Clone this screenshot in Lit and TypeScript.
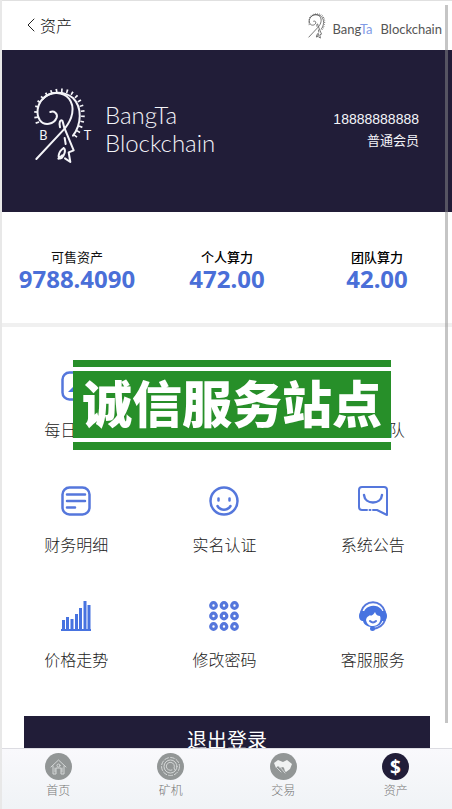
import { LitElement, html, css, svg, TemplateResult } from "lit";
import { customElement } from "lit/decorators.js";
import { classMap } from "lit/directives/class-map.js";

interface Entry {
  label: string;
  icon: TemplateResult;
}

const ram = svg`
  <path d="M90 92C101 87 113 97 109 109C101 130 72 134 59 117C46 98 50 68 70 50C92 29 128 31 146 52C166 78 156 114 133 142L48 233"/>
  <path d="M66 54C88 28 132 28 158 50C186 78 184 128 158 163"/>
  <path class="teeth" d="M52 126C38 90 54 50 82 37C112 21 146 24 168 46C196 78 194 128 164 166"/>
  <path d="M119 138C115 124 120 113 126 118C130 128 130 136 133 142L160 207L145 213L150 242L134 231M133 170L136 188M130 200C112 212 110 238 124 230C132 222 138 206 130 200M114 232L126 222"/>`;

const menu: Entry[] = [
  {
    label: "每日签到",
    icon: svg`<rect x="1.5" y="1.5" width="27" height="27" rx="7"/><path class="fill" d="M7 21l5-5 3 5z"/><path d="M14 20L22 9"/>`,
  },
  {
    label: "资产转换",
    icon: svg`<circle cx="15" cy="15" r="13"/><path d="M8 12h14l-4-4M22 18H8l4 4"/>`,
  },
  {
    label: "我的团队",
    icon: svg`<circle cx="15" cy="9" r="6"/><path d="M3 28c0-14 24-14 24 0z"/>`,
  },
  {
    label: "财务明细",
    icon: svg`<rect x="1.5" y="1.5" width="27" height="27" rx="7"/><path d="M6 8.500h18M6 15h18M6 21.500h8"/>`,
  },
  {
    label: "实名认证",
    icon: svg`<circle cx="15" cy="15" r="13.500"/><path d="M9.500 12.500v2M20.500 12.500v2M8.500 20c3 5 10 5 13 0"/>`,
  },
  {
    label: "系统公告",
    icon: svg`<path class="line" d="M9 24H4a3 3 0 0 1-3-3V4a3 3 0 0 1 3-3h22a3 3 0 0 1 3 3v25l-10-5h-4M11.500 24h1"/><path d="M6 9c1 10 17 10 18 0"/>`,
  },
  {
    label: "价格走势",
    icon: svg`<path class="fill" d="M0 28h30v2H0zM1 19h3v9H1zM5 16h3v12H5zM9.500 18h3v10h-3zM14 13h3v15h-3zM18 7h3v21h-3zM22.500 0h3v28h-3zM26.500 4h3v24h-3z"/>`,
  },
  {
    label: "修改密码",
    icon: svg`${[4.5, 15, 25.5].map((y) =>
      [4.5, 15, 25.5].map((x) => svg`<circle class="ring" cx=${x} cy=${y} r="2.800"/>`)
    )}`,
  },
  {
    label: "客服服务",
    icon: svg`<path class="line" d="M3 11C6-2 24-2 27 11M27 19C25 25 21 27 15 28"/>
      <path class="fill" d="M4 10h2v10H4C0 19 0 11 4 10zM26 10h-2v10h2c4-1 4-9 0-10z"/>
      <path class="fill" d="M5 20C1 0 29 0 25 18C24 23 20 26 15 26C10 26 6 24 5 20z"/>
      <path class="paper" d="M8 19C9 15 10 16 12 14C13 16 16 13 17 11C18 14 20 15 22 15C24 20 20 25 15 25C11 25 9 23 8 19z"/>
      <path class="line" d="M12 20c2 2 4 2 6 0"/><circle class="fill" cx="14.500" cy="27.500" r="2.500"/>`,
  },
];

const tabs: Entry[] = [
  {
    label: "首页",
    icon: svg`<path d="M6 14l7.500-7L21 14M8 13v8h3v-6h5v6h3v-8M10 15v4M17 15v4"/><circle cx="13.500" cy="12.500" r="1.500"/>`,
  },
  {
    label: "矿机",
    icon: svg`<circle class="dash" cx="13.500" cy="13.500" r="9"/><circle cx="13.500" cy="13.500" r="6.500"/><path d="M15 17a4 4 0 1 1 2-2l1 2"/>`,
  },
  {
    label: "交易",
    icon: svg`<path class="solid" d="M4 10l4-3 5 2 4-2 5 4-2 5-4 3c-2-1-1-4-3-5l-3 1-2-2-2 2z"/><path d="M7 15l4 4M10 14l5 6"/>`,
  },
  {
    label: "资产",
    icon: svg`<text x="13.500" y="20.500" text-anchor="middle">$</text>`,
  },
];

const stats = [
  { label: "可售资产", value: "9788.4090", strong: false },
  { label: "个人算力", value: "472.00", strong: true },
  { label: "团队算力", value: "42.00", strong: true },
];

@customElement("app-root")
export class AppRoot extends LitElement {
  static styles = css`
    :host {
      display: flex;
      flex-direction: column;
      position: relative;
      box-sizing: border-box;
      height: 100vh;
      border-left: 2px solid #e8e8e8;
      background: #fff;
      color: #222;
      font-family: "Noto Sans", "Noto Sans CJK SC", sans-serif;
      overflow: hidden;
    }
    a {
      color: inherit;
      text-decoration: none;
    }
    svg {
      display: block;
      fill: none;
      stroke-linecap: round;
      stroke-linejoin: round;
    }
    .top {
      flex: none;
      box-sizing: border-box;
      display: flex;
      align-items: center;
      justify-content: space-between;
      height: 50px;
      padding: 0 10px 0 24px;
      border-top: 1px solid #e0e0e0;
    }
    .back {
      display: flex;
      align-items: center;
      gap: 4px;
      padding: 0 0 2px;
      border: 0;
      background: none;
      color: #111;
      font: 300 16px/24px "Noto Sans CJK SC", sans-serif;
    }
    .back svg {
      width: 10px;
      height: 16px;
      stroke: #222;
    }
    .brand {
      display: flex;
      align-items: center;
      gap: 8px;
      color: #555;
      font: 400 13px/18px Lato, sans-serif;
    }
    .brand span {
      padding-top: 6px;
    }
    .brand svg {
      width: 20px;
      height: 26px;
      margin-right: -3px;
      stroke: #555;
      stroke-width: 7;
    }
    .brand em {
      color: #7f9be6;
      font-style: normal;
    }
    .teeth {
      stroke-width: 11;
      stroke-dasharray: 5 11;
      stroke-linecap: butt;
    }
    .scroll {
      flex: 1;
      min-height: 0;
      overflow: hidden;
    }
    .banner {
      display: flex;
      align-items: center;
      justify-content: space-between;
      box-sizing: border-box;
      height: 162px;
      padding: 0 33px 2px 31px;
      background: #211d38;
      color: #f4f4f8;
    }
    .logo {
      display: flex;
      align-items: center;
      gap: 12px;
      padding-bottom: 8px;
      font: 300 24px/28px Lato, sans-serif;
    }
    .logo span {
      padding-top: 6px;
    }
    .logo svg {
      width: 60px;
      height: 76px;
      stroke: #f4f4f8;
      stroke-width: 6;
    }
    .logo text {
      fill: #f4f4f8;
      stroke: none;
      font: 400 38px Lato, sans-serif;
    }
    .user {
      display: flex;
      flex-direction: column;
      font-size: 13px;
      line-height: 21px;
      text-align: right;
    }
    .phone {
      font-family: "Liberation Sans", sans-serif;
      font-size: 14px;
    }
    .stats {
      display: grid;
      grid-template-columns: repeat(3, 1fr);
      margin: 0;
      padding: 36px 0 31px;
      border-bottom: 4px solid #f0f0f0;
      text-align: center;
    }
    .stats dt {
      color: #111;
      font-size: 13px;
      line-height: 18px;
    }
    .stats .strong {
      color: #000;
      font-weight: 500;
    }
    .stats dd {
      margin: 0;
      color: #4a6fd8;
      font-size: 24px;
      font-weight: 700;
      line-height: 26px;
    }
    .menu {
      position: relative;
      padding: 44px 5px 46px 0;
    }
    .grid {
      display: grid;
      grid-template-columns: repeat(3, 1fr);
      row-gap: 46px;
    }
    .item {
      display: flex;
      flex-direction: column;
      align-items: center;
      gap: 17px;
      font: 300 16px/22px "Noto Sans CJK SC", sans-serif;
    }
    .item svg {
      width: 30px;
      height: 30px;
      stroke: #5577dc;
      stroke-width: 2.5;
    }
    .item .line {
      stroke-width: 2;
    }
    .item .ring {
      stroke-width: 3.2;
    }
    .item .fill {
      fill: #4773e0;
      stroke: none;
    }
    .item .paper {
      fill: #fff;
      stroke: none;
    }
    .stamp {
      position: absolute;
      top: 33px;
      left: 71px;
      right: 61px;
      background: #278f29;
      border-top: 7px solid #278f29;
      border-bottom: 8px solid #278f29;
    }
    .stamp strong {
      display: block;
      padding-bottom: 6px;
      border: solid #fff;
      border-width: 4px 0;
      color: #fff;
      font: 900 50px/61px "Noto Sans CJK SC", sans-serif;
      text-align: center;
      white-space: nowrap;
    }
    .logout {
      display: block;
      width: calc(100% - 44px);
      height: 48px;
      margin: 0 22px;
      padding: 0;
      border: 0;
      background: #211d38;
      color: #fff;
      font: 400 20px/48px "Noto Sans CJK SC", sans-serif;
    }
    .tabs {
      flex: none;
      display: grid;
      grid-template-columns: repeat(4, 1fr);
      padding: 4px 0 11px;
      border-top: 1px solid #dcdce2;
      background: linear-gradient(#f9f9fc, #f0f3f6);
    }
    .tab {
      display: flex;
      flex-direction: column;
      align-items: center;
      gap: 2px;
      color: #777;
      font: 300 12px/16px "Noto Sans CJK SC", sans-serif;
    }
    .tab svg {
      width: 27px;
      height: 27px;
      border-radius: 50%;
      background: #929696;
      stroke: #d4d7d7;
    }
    .tab .dash {
      stroke-dasharray: 4 2;
    }
    .tab .solid {
      fill: #f0f2f2;
      stroke: none;
    }
    .tab.on svg {
      background: #211d38;
    }
    .tab text {
      fill: #fff;
      stroke: none;
      font: 700 19px "Noto Sans", sans-serif;
    }
    .thumb {
      position: absolute;
      top: 5px;
      right: 4px;
      bottom: 86px;
      width: 3px;
      background: rgba(140, 140, 140, 0.5);
    }
  `;

  render() {
    return html`
      <header class="top">
        <button class="back">
          <svg viewBox="0 0 10 16"><path d="M8 2L2 8l6 6" /></svg>资产
        </button>
        <div class="brand">
          <svg viewBox="40 20 160 230">${ram}</svg>
          <span>Bang<em>Ta</em></span>
          <span>Blockchain</span>
        </div>
      </header>
      <main class="scroll">
        <section class="banner">
          <div class="logo">
            <svg viewBox="38 20 180 228">
              ${ram}
              <text x="57" y="176">B</text>
              <text x="190" y="176">T</text>
            </svg>
            <span>BangTa<br />Blockchain</span>
          </div>
          <div class="user"><span class="phone">18888888888</span><span>普通会员</span></div>
        </section>
        <dl class="stats">
          ${stats.map(
            (s) => html`<div>
              <dt class=${classMap({ strong: s.strong })}>${s.label}</dt>
              <dd>${s.value}</dd>
            </div>`
          )}
        </dl>
        <section class="menu">
          <nav class="grid">
            ${menu.map(
              (m) => html`<a class="item" href="#"><svg viewBox="0 0 30 30">${m.icon}</svg>${m.label}</a>`
            )}
          </nav>
          <div class="stamp"><strong>诚信服务站点</strong></div>
        </section>
        <button class="logout">退出登录</button>
      </main>
      <nav class="tabs">
        ${tabs.map(
          (t, i) => html`<a class=${classMap({ tab: true, on: i === 3 })} href="#"
            ><svg viewBox="0 0 27 27">${t.icon}</svg>${t.label}</a
          >`
        )}
      </nav>
      <div class="thumb"></div>
    `;
  }
}
